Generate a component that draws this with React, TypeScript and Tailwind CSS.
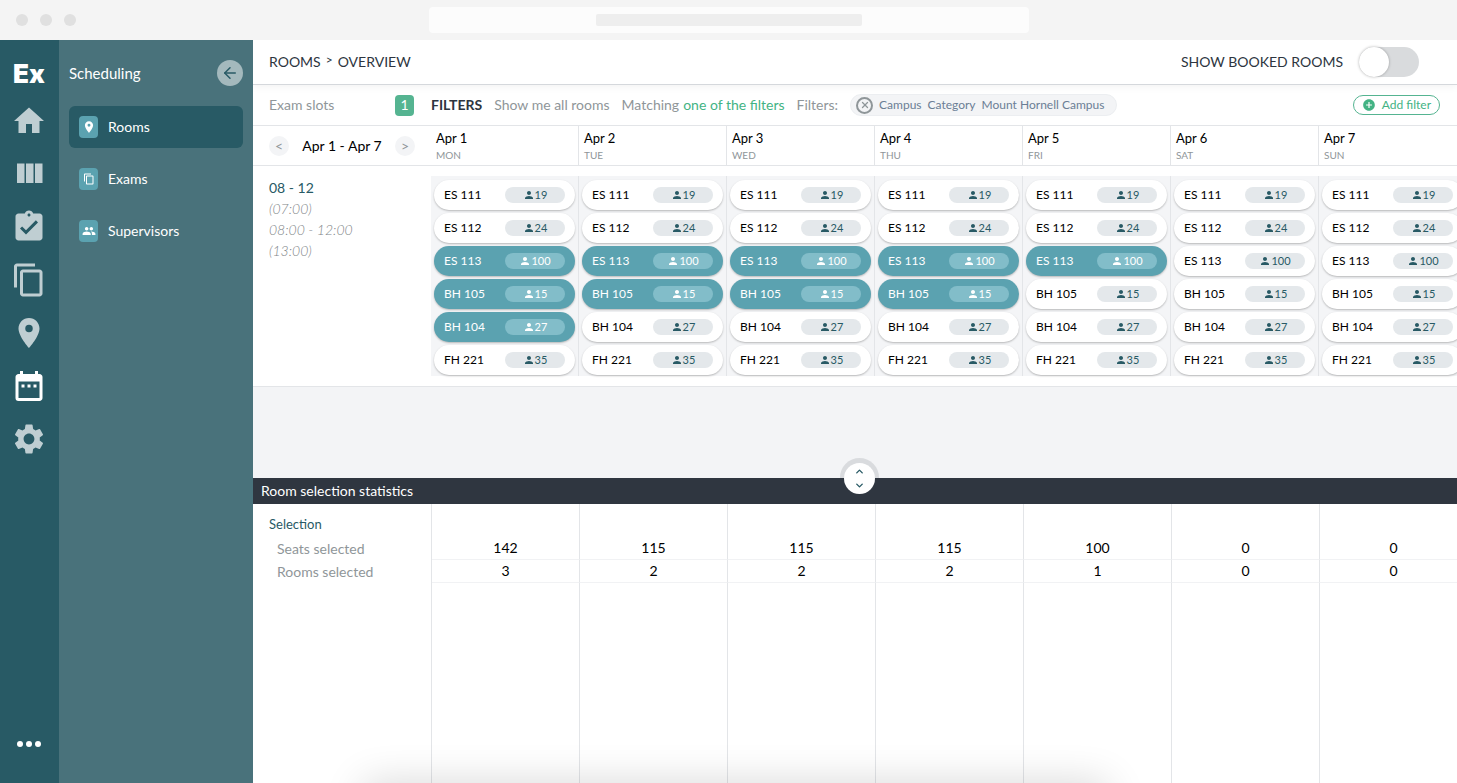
import { useState } from "react";
import {
  MdAddCircle,
  MdAssignmentTurnedIn,
  MdContentCopy,
  MdDateRange,
  MdHome,
  MdPeople,
  MdPerson,
  MdPlace,
  MdSettings,
} from "react-icons/md";
import { ArrowLeft, ChevronDown, ChevronUp, X } from "lucide-react";
import clsx from "clsx";

const ROOMS = [
  { name: "ES 111", seats: 19 },
  { name: "ES 112", seats: 24 },
  { name: "ES 113", seats: 100 },
  { name: "BH 105", seats: 15 },
  { name: "BH 104", seats: 27 },
  { name: "FH 221", seats: 35 },
];

const DAYS = [
  { date: "Apr 1", day: "MON" },
  { date: "Apr 2", day: "TUE" },
  { date: "Apr 3", day: "WED" },
  { date: "Apr 4", day: "THU" },
  { date: "Apr 5", day: "FRI" },
  { date: "Apr 6", day: "SAT" },
  { date: "Apr 7", day: "SUN" },
];

const INITIAL: string[][] = [
  ["ES 113", "BH 105", "BH 104"],
  ["ES 113", "BH 105"],
  ["ES 113", "BH 105"],
  ["ES 113", "BH 105"],
  ["ES 113"],
  [],
  [],
];

function ColumnsIcon() {
  return (
    <svg viewBox="0 0 24 24" fill="currentColor" className="size-9">
      <path d="M10 18h5V5h-5v13zm-6 0h5V5H4v13zM16 5v13h5V5h-5z" />
    </svg>
  );
}

function BrowserBar() {
  return (
    <div className="relative flex h-10 shrink-0 items-center justify-center bg-[#f4f4f4]">
      <div className="absolute left-4 flex gap-3">
        <span className="size-3 rounded-full bg-[#e0e0e0]" />
        <span className="size-3 rounded-full bg-[#e0e0e0]" />
        <span className="size-3 rounded-full bg-[#e0e0e0]" />
      </div>
      <div className="flex h-[26px] w-[600px] items-center justify-center rounded bg-[#fcfcfc]">
        <span className="h-3 w-[266px] rounded-xs bg-[#eeeeee]" />
      </div>
    </div>
  );
}

function Rail() {
  const items = [
    { label: "Home", icon: <MdHome className="size-9" /> },
    { label: "Boards", icon: <ColumnsIcon /> },
    { label: "Tasks", icon: <MdAssignmentTurnedIn className="size-9" /> },
    { label: "Documents", icon: <MdContentCopy className="size-9" /> },
    { label: "Places", icon: <MdPlace className="size-9" /> },
    { label: "Scheduling", icon: <MdDateRange className="size-9" />, active: true },
    { label: "Settings", icon: <MdSettings className="size-9" /> },
  ];

  return (
    <nav className="flex w-[59px] shrink-0 flex-col items-center bg-[#285a65] pt-[18px] pr-px pb-8">
      <a href="#" className="font-[Inter,sans-serif] text-[26px] leading-8 font-black text-white">
        Ex
      </a>
      <div className="mt-[13px] flex flex-col gap-[17px]">
        {items.map((item) => (
          <a
            key={item.label}
            href="#"
            aria-label={item.label}
            className={item.active ? "text-white" : "text-[#bfced2]"}
          >
            {item.icon}
          </a>
        ))}
      </div>
      <button aria-label="More" className="mt-auto flex h-3.5 items-center gap-[3px]">
        <span className="size-1.5 rounded-full bg-white" />
        <span className="size-1.5 rounded-full bg-white" />
        <span className="size-1.5 rounded-full bg-white" />
      </button>
    </nav>
  );
}

function Sidebar() {
  const items = [
    { label: "Rooms", icon: <MdPlace className="size-3.5" />, active: true },
    { label: "Exams", icon: <MdContentCopy className="size-3" /> },
    { label: "Supervisors", icon: <MdPeople className="size-3.5" /> },
  ];

  return (
    <aside className="w-[194px] shrink-0 bg-[#49727b] px-2.5 pt-5 text-white">
      <div className="flex items-center justify-between">
        <h1 className="text-[15px]">Scheduling</h1>
        <button
          aria-label="Collapse"
          className="flex size-[26px] items-center justify-center rounded-full bg-[#a4b9bd] text-[#285a65]"
        >
          <ArrowLeft size={18} />
        </button>
      </div>
      <nav className="mt-5 flex flex-col gap-2.5">
        {items.map((item) => (
          <a
            key={item.label}
            href="#"
            className={clsx(
              "flex h-[42px] items-center gap-2.5 rounded-md px-2.5 text-sm",
              item.active && "bg-[#285a65]"
            )}
          >
            <span className="flex h-[22px] w-[19px] items-center justify-center rounded bg-[#5ba2b0]">
              {item.icon}
            </span>
            {item.label}
          </a>
        ))}
      </nav>
    </aside>
  );
}

function TopBar() {
  return (
    <header className="z-10 flex h-[45px] shrink-0 items-center justify-between border-b border-[#d5d8dc] bg-white pr-[38px] pl-4 text-sm text-[#2d3540] shadow-[0_2px_8px_rgba(0,0,0,0.05)]">
      <div className="flex gap-[5px]">
        <a href="#">ROOMS</a>
        <span className="text-xs leading-4">&gt;</span>
        <span>OVERVIEW</span>
      </div>
      <label className="flex items-center gap-4">
        SHOW BOOKED ROOMS
        <input
          type="checkbox"
          className="h-[30px] w-[60px] appearance-none rounded-full bg-[#d9dbdd] before:block before:size-[30px] before:rounded-full before:bg-white before:shadow-[0_0_3px_rgba(0,0,0,0.3)] checked:bg-[#55b491] checked:before:ml-[30px]"
        />
      </label>
    </header>
  );
}

function FilterBar() {
  return (
    <div className="flex h-[41px] shrink-0 items-center border-b border-[#e3e5e8] pr-[17px] pl-4 text-sm text-[#8f9699]">
      <div className="flex w-[162px] shrink-0 items-center justify-between pr-[17px]">
        <span>Exam slots</span>
        <span className="flex h-[21px] w-[19px] items-center justify-center rounded bg-[#55b491] text-white">
          1
        </span>
      </div>
      <div className="flex items-center gap-3 whitespace-nowrap">
        <strong className="text-[#2d3540]">FILTERS</strong>
        <span>Show me all rooms</span>
        <span className="flex gap-1">
          Matching <button className="text-[#43b384]">one of the filters</button>
        </span>
        <span>Filters:</span>
        <span className="flex h-[22px] items-center gap-1.5 rounded-full border border-[#eceef1] bg-[#f3f4f6] pr-3 pl-[5px] text-xs text-[#6b7e95]">
          <button
            aria-label="Remove filter"
            className="flex size-[17px] items-center justify-center rounded-full border-2 border-[#8f9699] text-[#8f9699]"
          >
            <X size={10} strokeWidth={3} />
          </button>
          <span>Campus</span>
          <span>Category</span>
          <span>Mount Hornell Campus</span>
        </span>
      </div>
      <button className="ml-auto flex h-5 items-center gap-1.5 rounded-full border border-[#55b491] px-2 text-xs text-[#43b384]">
        <MdAddCircle className="size-3.5" /> Add filter
      </button>
    </div>
  );
}

function RoomPill({
  name,
  seats,
  selected,
  onClick,
}: {
  name: string;
  seats: number;
  selected: boolean;
  onClick: () => void;
}) {
  return (
    <button
      onClick={onClick}
      aria-pressed={selected}
      className={clsx(
        "flex h-[30px] items-center justify-between rounded-full px-2.5 text-xs shadow-[0_1px_2px_rgba(0,0,0,0.25)]",
        selected ? "bg-[#5ba2b0] text-white" : "bg-white text-black"
      )}
    >
      {name}
      <span
        className={clsx(
          "flex h-4 w-[60px] items-center justify-center rounded-full text-[11px]",
          selected ? "bg-[#82bdc9] text-white" : "bg-[#e4e8eb] text-[#285a65]"
        )}
      >
        <MdPerson className="size-3" />
        {seats}
      </span>
    </button>
  );
}

function Calendar({
  selection,
  onToggle,
}: {
  selection: string[][];
  onToggle: (day: number, room: string) => void;
}) {
  return (
    <section className="shrink-0 border-b border-[#e3e5e8] bg-white">
      <div className="flex h-10 border-b border-[#e3e5e8]">
        <div className="flex w-[178px] shrink-0 items-center justify-between px-4 text-sm">
          <button
            aria-label="Previous week"
            className="flex size-5 items-center justify-center rounded-full bg-[#f3f4f6] text-[#8f9699]"
          >
            &lt;
          </button>
          <span>Apr 1 - Apr 7</span>
          <button
            aria-label="Next week"
            className="flex size-5 items-center justify-center rounded-full bg-[#f3f4f6] text-[#8f9699]"
          >
            &gt;
          </button>
        </div>
        {DAYS.map((d) => (
          <div
            key={d.date}
            className="min-w-[148px] flex-1 border-r border-[#e3e5e8] pt-1 pl-[5px]"
          >
            <div className="text-[13px] leading-4">{d.date}</div>
            <div className="text-[10px] leading-[18px] text-[#8f9699]">{d.day}</div>
          </div>
        ))}
      </div>

      <div className="flex py-2.5">
        <div className="w-[178px] shrink-0 pt-px pl-4 text-sm leading-[21px] font-light text-[#7f8689] italic">
          <div className="font-normal text-[#285a65] not-italic">08 - 12</div>
          <div>(07:00)</div>
          <div>08:00 - 12:00</div>
          <div>(13:00)</div>
        </div>
        {DAYS.map((d, i) => (
          <div
            key={d.date}
            className="flex min-w-[148px] flex-1 flex-col gap-[3px] border-r border-[#e3e5e8] bg-[#f4f5f7] px-[3px] pt-1 pb-px"
          >
            {ROOMS.map((room) => (
              <RoomPill
                key={room.name}
                name={room.name}
                seats={room.seats}
                selected={selection[i].includes(room.name)}
                onClick={() => onToggle(i, room.name)}
              />
            ))}
          </div>
        ))}
      </div>
    </section>
  );
}

function Statistics({ selection }: { selection: string[][] }) {
  const seats = selection.map((names) =>
    ROOMS.filter((r) => names.includes(r.name)).reduce((sum, r) => sum + r.seats, 0)
  );
  const rows = [
    { label: "Seats selected", values: seats },
    { label: "Rooms selected", values: selection.map((names) => names.length) },
  ];

  return (
    <section className="flex flex-1 flex-col bg-white">
      <div className="relative flex h-[26px] shrink-0 items-center bg-[#2f3640] pl-2 text-sm text-white">
        <h2>Room selection statistics</h2>
        <div className="absolute bottom-full left-[calc(50%-15px)] h-5 w-[39px] rounded-t-full bg-[#d9dbde]" />
        <button
          aria-label="Resize statistics"
          className="absolute -top-[15px] left-[calc(50%-11px)] flex size-[31px] flex-col items-center justify-between rounded-full bg-white py-[3px] text-[#285a65]"
        >
          <ChevronUp size={11} strokeWidth={3} />
          <ChevronDown size={11} strokeWidth={3} />
        </button>
      </div>
      <table className="w-full min-w-[1215px] flex-1 table-fixed border-separate border-spacing-0 text-sm">
        <colgroup>
          <col className="w-[179px]" />
          {DAYS.map((d) => (
            <col key={d.date} />
          ))}
        </colgroup>
        <tbody>
          <tr className="h-[33px]">
            <th className="border-r border-[#e3e5e8] pt-2 pl-4 text-left text-[13px] font-normal text-[#285a65]">
              Selection
            </th>
            {DAYS.map((d) => (
              <td key={d.date} className="border-r border-[#e3e5e8]" />
            ))}
          </tr>
          {rows.map((row) => (
            <tr key={row.label} className="h-[23px]">
              <th className="border-r border-[#e3e5e8] pl-6 text-left font-normal text-[#8f9699]">
                {row.label}
              </th>
              {row.values.map((value, i) => (
                <td key={i} className="border-r border-b border-[#e3e5e8] border-b-[#f1f2f4] text-center">
                  {value}
                </td>
              ))}
            </tr>
          ))}
          <tr>
            <td className="border-r border-[#e3e5e8]" />
            {DAYS.map((d) => (
              <td key={d.date} className="border-r border-[#e3e5e8]" />
            ))}
          </tr>
        </tbody>
      </table>
    </section>
  );
}

export default function App() {
  const [selection, setSelection] = useState(INITIAL);

  const toggle = (day: number, room: string) =>
    setSelection((prev) =>
      prev.map((names, i) => {
        if (i !== day) return names;
        return names.includes(room) ? names.filter((n) => n !== room) : [...names, room];
      })
    );

  return (
    <div className="relative flex h-screen flex-col overflow-hidden font-['Lato',sans-serif] text-black">
      <BrowserBar />
      <div className="flex min-h-0 flex-1">
        <Rail />
        <Sidebar />
        <main className="flex min-w-0 flex-1 flex-col overflow-hidden bg-white">
          <TopBar />
          <FilterBar />
          <Calendar selection={selection} onToggle={toggle} />
          <div className="h-[91px] shrink-0 bg-[#f3f4f6]" />
          <Statistics selection={selection} />
        </main>
      </div>
      <div className="pointer-events-none absolute right-[24%] -bottom-10 left-[25%] h-10 shadow-[0_0_40px_rgba(0,0,0,0.16)]" />
    </div>
  );
}
